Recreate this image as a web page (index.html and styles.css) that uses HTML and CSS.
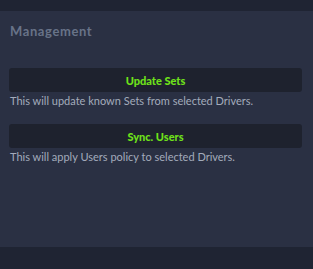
FILE: index.html
```html
<!DOCTYPE html>
<html lang="en">
<head>
    <meta charset="UTF-8">
    <title>Management</title>
    <link rel="stylesheet" href="styles.css">
</head>
<body>
    <div class="top-bar"></div>
    <section class="panel">
        <h3 class="panel-title">Management</h3>
        <div class="action">
            <button class="action-btn">Update Sets</button>
            <p class="action-desc">This will update known Sets from selected Drivers.</p>
        </div>
        <div class="action">
            <button class="action-btn">Sync. Users</button>
            <p class="action-desc">This will apply Users policy to selected Drivers.</p>
        </div>
    </section>
    <div class="bottom-bar"></div>
</body>
</html>
```

FILE: styles.css
```css
body {
    margin: 0;
    width: 313px;
    height: 269px;
    overflow: hidden;
    background: #1f2433;
    font-family: "Lato", "Open Sans", sans-serif;
    display: flex;
    flex-direction: column;
}

.top-bar {
    height: 11px;
    background: #1f2433;
}

.panel {
    height: 236px;
    box-sizing: border-box;
    background: #2a3043;
    padding: 11px 11px 0 9px;
}

.panel-title {
    margin: 0 0 0 1px;
    font-size: 13px;
    font-weight: 700;
    letter-spacing: 0.6px;
    color: #687388;
    line-height: 18px;
}

.action {
    margin-top: 28px;
}

.action + .action {
    margin-top: 16px;
}

.action-btn {
    display: block;
    width: 100%;
    height: 24px;
    border: 0;
    border-radius: 3px;
    background: #1e222e;
    color: #6ee11a;
    font-family: inherit;
    font-size: 11px;
    font-weight: 900;
    padding: 0;
}

.action-desc {
    margin: 2px 0 0 1px;
    font-size: 11px;
    line-height: 14px;
    color: #a3abbb;
}

.bottom-bar {
    flex: 1;
    background: #1f2433;
}
```
